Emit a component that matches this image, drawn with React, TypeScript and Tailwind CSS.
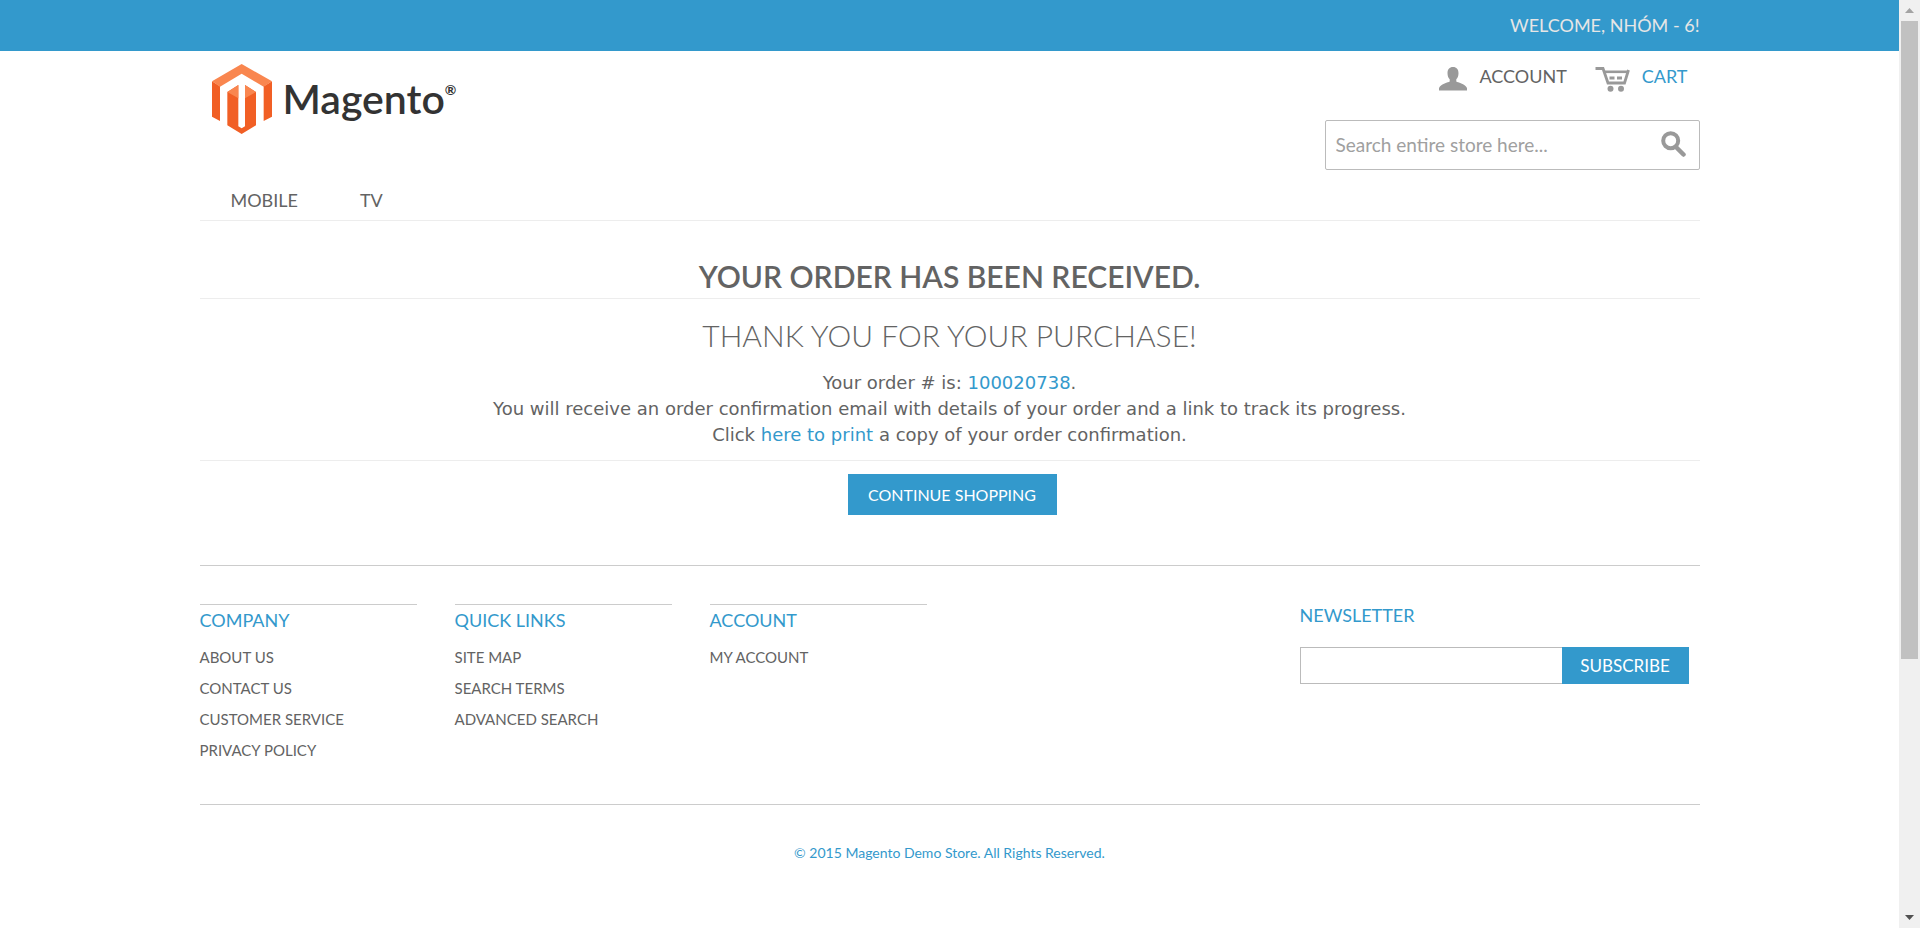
import React from "react";

const footerColumns = [
  { title: "Company", links: ["About Us", "Contact Us", "Customer Service", "Privacy Policy"] },
  { title: "Quick Links", links: ["Site Map", "Search Terms", "Advanced Search"] },
  { title: "Account", links: ["My Account"] },
];

function Logo() {
  return (
    <a href="#" aria-label="Magento home" className="flex items-start pl-3 pt-[13px]">
      <svg width="60" height="70" viewBox="0 0 180 210" aria-hidden="true">
        <path d="M0 52 24 67V171L0 158ZM180 52 155 67V171L180 158Z" fill="#f15f25" />
        <path d="M89 0 180 52 155 68 89 29 24 68 0 52Z" fill="#f9864f" />
        <path d="M46 84 79 63V187L89 193 99 187V63L132 84V184L89 210 46 184Z" fill="#f15f25" />
        <path d="M46 84 79 63V103ZM132 84 99 63V103Z" fill="#f9864f" />
      </svg>
      <span className="pl-[11px] pt-2 font-['Lato',sans-serif] text-[41px] font-semibold leading-[54px] text-[#333]">
        Magento
      </span>
      <span className="pt-3 font-['Lato',sans-serif] text-[14px] font-bold leading-[28px] text-[#333]">®</span>
    </a>
  );
}

function UserIcon() {
  return (
    <svg className="mt-1" width="28" height="24" viewBox="0 0 28 24" fill="#999" aria-hidden="true">
      <path d="M14 0C17.600 0 19.500 2.300 19.500 6.200 19.500 9.200 18.500 11 17.300 12.300V14.600C18.500 15.600 26 16.800 28 21V23.500H0V21C2 16.800 9.500 15.600 10.700 14.600V12.300C9.500 11 8.500 9.200 8.500 6.200 8.500 2.300 10.400 0 14 0Z" />
    </svg>
  );
}

function CartIcon() {
  return (
    <svg className="mt-1" width="35" height="25" viewBox="0 0 35 25" fill="none" stroke="#999" aria-hidden="true">
      <path d="M0.500 1.500H8L13 16H29.500L33.500 3" strokeWidth="2.800" />
      <path d="M9 4.800H33" strokeWidth="2.600" />
      <path d="M14.500 11H19.500M22 11H27" strokeWidth="2.800" />
      <circle cx="15.500" cy="21.800" r="3" fill="#999" stroke="none" />
      <circle cx="26" cy="21.800" r="3" fill="#999" stroke="none" />
    </svg>
  );
}

function SearchIcon() {
  return (
    <svg width="25" height="26" viewBox="0 0 25 26" fill="none" stroke="#999" aria-hidden="true">
      <circle cx="9.700" cy="9.700" r="7.500" strokeWidth="4" />
      <path d="M15 16 22.500 23.500" strokeWidth="4.500" strokeLinecap="round" />
    </svg>
  );
}

function Scrollbar() {
  return (
    <div aria-hidden="true" className="sticky top-0 flex h-screen w-[21px] shrink-0 flex-col bg-[#f0f0f0]">
      <div className="flex h-[21px] items-center justify-center">
        <svg width="9" height="5" viewBox="0 0 9 5"><path d="M4.500 0 9 5H0Z" fill="#a3a3a3" /></svg>
      </div>
      <div className="flex-1 px-0.5">
        <div className="h-[72%] bg-[#c1c1c1]" />
      </div>
      <div className="flex h-[21px] items-center justify-center">
        <svg width="9" height="5" viewBox="0 0 9 5"><path d="M0 0H9L4.500 5Z" fill="#505050" /></svg>
      </div>
    </div>
  );
}

export default function App() {
  return (
    <div className="flex min-h-screen bg-white font-['Lato',sans-serif] text-[#636363]">
      <div className="min-w-0 flex-1">
        <div className="bg-[#3399cc]">
          <p className="mx-auto max-w-[1500px] py-3 text-right text-[18px] uppercase leading-[27px] text-[#e6e6e6]">
            Welcome, Nhóm - 6!
          </p>
        </div>

        <div className="mx-auto max-w-[1500px]">
          <header>
            <div className="flex items-start justify-between">
              <Logo />
              <div className="w-[375px] pt-3">
                <div className="flex h-7 items-start justify-end gap-7 pr-3 text-[18px] uppercase leading-[26px]">
                  <a href="#" className="flex items-start gap-3">
                    <UserIcon />
                    Account
                  </a>
                  <a href="#" className="flex items-start gap-3 text-[#3399cc]">
                    <CartIcon />
                    Cart
                  </a>
                </div>
                <form className="mt-[29px] flex h-[50px] items-center rounded-xs border border-[#bbb] pl-[10px] pr-[13px]">
                  <input
                    type="search"
                    aria-label="Search"
                    placeholder="Search entire store here..."
                    className="min-w-0 flex-1 bg-transparent text-[19px] leading-7 outline-none placeholder:text-[#a0a0a0]"
                  />
                  <button type="button" aria-label="Search" className="pb-0.5">
                    <SearchIcon />
                  </button>
                </form>
              </div>
            </div>
            <nav className="mt-[11px] flex border-b border-[#ededed] text-[18px] uppercase leading-[39px]">
              <a href="#" className="px-[31px]">Mobile</a>
              <a href="#" className="px-[31px]">TV</a>
            </nav>
          </header>

          <main className="text-center">
            <h1 className="border-b border-[#ededed] pb-px pt-[34px] text-[30px] font-semibold uppercase leading-[42px]">
              Your order has been received.
            </h1>
            <h2 className="pt-[15px] text-[30px] font-light uppercase leading-[42px]">Thank you for your purchase!</h2>
            <div className="border-b border-[#ededed] pb-3 pt-[14px] font-['DejaVu_Sans',sans-serif] text-[18px] leading-[26px]">
              <p>
                Your order # is: <a href="#" className="text-[#3399cc]">100020738</a>.
              </p>
              <p>You will receive an order confirmation email with details of your order and a link to track its progress.</p>
              <p>
                Click <a href="#" className="text-[#3399cc]">here to print</a> a copy of your order confirmation.
              </p>
            </div>
            <button type="button" className="ml-[5px] mt-[13px] h-[41px] w-[209px] bg-[#3399cc] text-[16px] uppercase text-white">
              Continue Shopping
            </button>
          </main>

          <footer className="mt-[50px] border-t border-[#ccc]">
            <div className="flex gap-[38px] border-b border-[#ccc] pb-[38px] pt-[38px]">
              {footerColumns.map((column) => (
                <section key={column.title} className="w-[217px] border-t border-[#ccc] uppercase">
                  <h3 className="text-[18px] leading-[30px] text-[#3399cc]">{column.title}</h3>
                  <ul className="pt-[7px] text-[15px] leading-[31px]">
                    {column.links.map((link) => (
                      <li key={link}>
                        <a href="#">{link}</a>
                      </li>
                    ))}
                  </ul>
                </section>
              ))}
              <form className="ml-auto w-[400px] pr-[11px]">
                <label htmlFor="newsletter" className="block text-[18px] uppercase leading-[22px] text-[#3399cc]">
                  Newsletter
                </label>
                <div className="mt-[21px] flex h-[37px]">
                  <input id="newsletter" type="email" className="min-w-0 flex-1 border border-r-0 border-[#bbb] px-2 outline-none" />
                  <button type="button" className="w-[127px] bg-[#3399cc] text-[17px] uppercase text-white">
                    Subscribe
                  </button>
                </div>
              </form>
            </div>
            <p className="py-[37px] text-center text-[14px] leading-[21px] text-[#3399cc]">
              © 2015 Magento Demo Store. All Rights Reserved.
            </p>
          </footer>
        </div>
      </div>
      <Scrollbar />
    </div>
  );
}
